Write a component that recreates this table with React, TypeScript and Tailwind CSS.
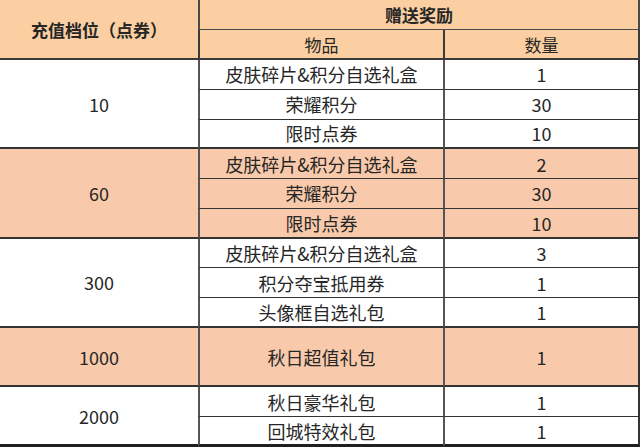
import React from "react"

type Group = {
  amount: string
  shaded: boolean
  items: [string, string][]
}

const groups: Group[] = [
  {
    amount: "10",
    shaded: false,
    items: [
      ["皮肤碎片&积分自选礼盒", "1"],
      ["荣耀积分", "30"],
      ["限时点券", "10"],
    ],
  },
  {
    amount: "60",
    shaded: true,
    items: [
      ["皮肤碎片&积分自选礼盒", "2"],
      ["荣耀积分", "30"],
      ["限时点券", "10"],
    ],
  },
  {
    amount: "300",
    shaded: false,
    items: [
      ["皮肤碎片&积分自选礼盒", "3"],
      ["积分夺宝抵用券", "1"],
      ["头像框自选礼包", "1"],
    ],
  },
  {
    amount: "1000",
    shaded: true,
    items: [["秋日超值礼包", "1"]],
  },
  {
    amount: "2000",
    shaded: false,
    items: [
      ["秋日豪华礼包", "1"],
      ["回城特效礼包", "1"],
    ],
  },
]

const spanClass: Record<number, string> = {
  1: "row-span-1",
  2: "row-span-2",
  3: "row-span-3",
}

export default function App() {
  return (
    <main className="h-[447px] w-[641px] bg-white font-['Noto_Sans_CJK_SC','Noto_Sans',sans-serif] text-[#262626]">
      <div className="grid h-[447px] w-[640px] grid-cols-[198px_245px_1fr] grid-rows-[30px_30px_repeat(13,1fr)]">
        {/* header */}
        <div className="row-span-2 flex items-center justify-center border-b-2 border-[#3a3a3a] bg-[#fbcfa1] text-[17px] font-bold leading-none">
          充值档位（点券）
        </div>
        <div className="col-span-2 flex items-center justify-center border-b border-l-2 border-r-2 border-[#4a4a4a] bg-[#fbcfa1] text-[17px] font-bold leading-none">
          赠送奖励
        </div>
        <div className="flex items-center justify-center border-b-2 border-l-2 border-[#3a3a3a] bg-[#fbcfa1] text-[17px] leading-none">
          物品
        </div>
        <div className="flex items-center justify-center border-b-2 border-l-2 border-r-2 border-[#3a3a3a] bg-[#fbcfa1] text-[17px] leading-none">
          数量
        </div>

        {groups.map((g, gi) => {
          const bg = g.shaded ? "bg-[#f8caab]" : "bg-white"
          const last = gi === groups.length - 1
          const groupBorder = last ? "border-b-[3px] border-b-[#1f1f1f]" : "border-b-2 border-b-[#333333]"
          // a single-item tier still takes two rows' height
          const rows = Math.max(g.items.length, 2)
          return (
            <React.Fragment key={g.amount}>
              <div
                className={`${spanClass[rows]} flex items-center justify-center text-[18px] leading-none ${bg} ${groupBorder}`}
              >
                {g.amount}
              </div>
              {g.items.map(([name, qty], i) => {
                const isLast = i === g.items.length - 1
                const rowBorder = isLast ? groupBorder : "border-b-[1.5px] border-b-[#333333]"
                const h = g.items.length === 1 ? "row-span-2" : "row-span-1"
                return (
                  <React.Fragment key={name}>
                    <div
                      className={`${h} flex items-center justify-center border-l-2 border-l-[#555555] text-[18px] leading-none ${bg} ${rowBorder}`}
                    >
                      {name}
                    </div>
                    <div
                      className={`${h} flex items-center justify-center border-l-2 border-r-2 border-l-[#555555] border-r-[#333333] text-[18px] leading-none ${bg} ${rowBorder}`}
                    >
                      {qty}
                    </div>
                  </React.Fragment>
                )
              })}
            </React.Fragment>
          )
        })}
      </div>
    </main>
  )
}
